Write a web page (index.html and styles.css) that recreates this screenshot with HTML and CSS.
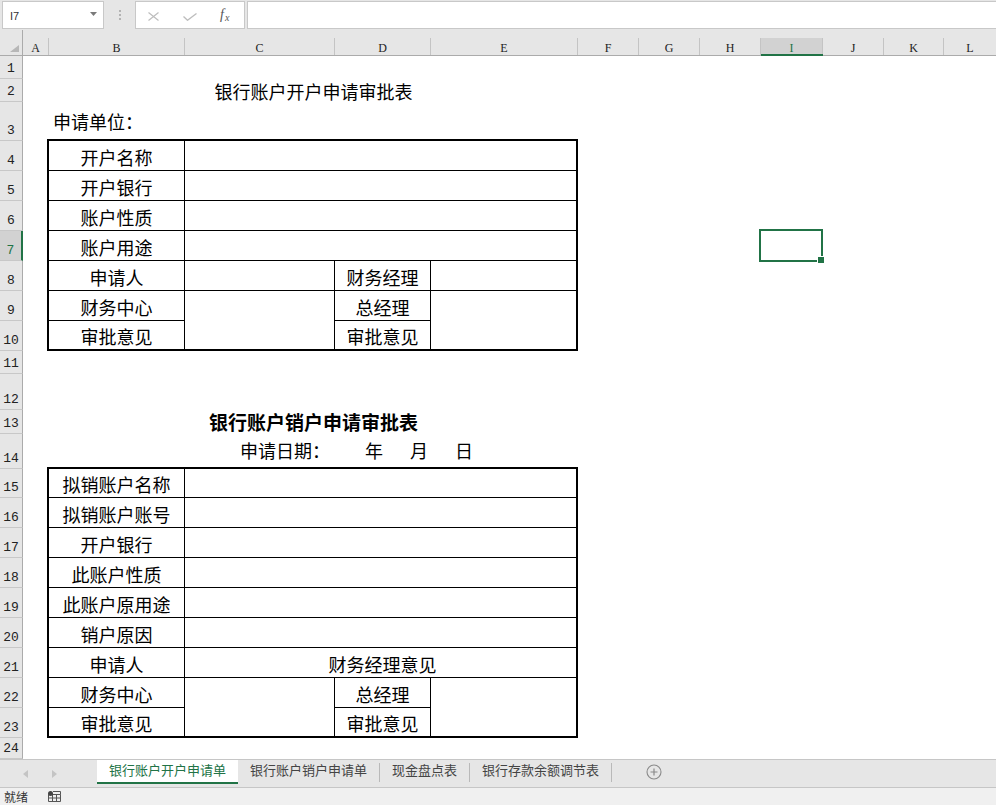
FILE: index.html
```html
<!DOCTYPE html>
<html lang="zh-CN">
<head>
<meta charset="utf-8">
<title>银行账户开户申请单</title>
<link rel="stylesheet" href="styles.css">
</head>
<body>
<div class="app">
  <div class="fbar">
    <div class="namebox">
      <span class="ref">I7</span>
      <svg class="caret" width="7" height="4" viewBox="0 0 7 4"><path d="M0 0H7L3.5 4Z" fill="#7a7a7a"/></svg>
    </div>
    <div class="fsep"><i></i><i></i><i></i></div>
    <div class="fbtns">
      <svg class="bx" width="11" height="9" viewBox="0 0 11 9"><path d="M0.5 0.5L10.5 8.5M10.5 0.5L0.5 8.5" stroke="#bdbdbd" stroke-width="1.2" fill="none"/></svg>
      <svg class="bok" width="14" height="8" viewBox="0 0 14 8"><path d="M0.5 3.5L4.5 7.3L13.5 0.5" stroke="#bdbdbd" stroke-width="1.3" fill="none"/></svg>
      <span class="fx"><i>f</i><span class="fxx">x</span></span>
    </div>
    <div class="finput"></div>
  </div>

  <div class="sheet">
    <div class="hd corner"><svg width="9" height="7" viewBox="0 0 9 7"><path d="M9 0V7H0Z" fill="#b7b7b7"/></svg></div>
    <div class="hd ch"><span>A</span></div>
    <div class="hd ch"><span>B</span></div>
    <div class="hd ch"><span>C</span></div>
    <div class="hd ch"><span>D</span></div>
    <div class="hd ch"><span>E</span></div>
    <div class="hd ch"><span>F</span></div>
    <div class="hd ch"><span>G</span></div>
    <div class="hd ch"><span>H</span></div>
    <div class="hd ch sel"><span>I</span></div>
    <div class="hd ch"><span>J</span></div>
    <div class="hd ch"><span>K</span></div>
    <div class="hd ch last"><span>L</span></div>

    <div class="rh">1</div>
    <div class="rh">2</div>
    <div class="rh">3</div>
    <div class="rh">4</div>
    <div class="rh">5</div>
    <div class="rh">6</div>
    <div class="rh sel">7</div>
    <div class="rh">8</div>
    <div class="rh">9</div>
    <div class="rh">10</div>
    <div class="rh">11</div>
    <div class="rh">12</div>
    <div class="rh">13</div>
    <div class="rh">14</div>
    <div class="rh">15</div>
    <div class="rh">16</div>
    <div class="rh">17</div>
    <div class="rh">18</div>
    <div class="rh">19</div>
    <div class="rh">20</div>
    <div class="rh">21</div>
    <div class="rh">22</div>
    <div class="rh">23</div>
    <div class="rh">24</div>

    <div class="title title1">银行账户开户申请审批表</div>
    <div class="unit">申请单位：</div>

    <div class="form form1">
      <div class="fc">开户名称</div><div class="fc wide"></div>
      <div class="fc">开户银行</div><div class="fc wide"></div>
      <div class="fc">账户性质</div><div class="fc wide"></div>
      <div class="fc">账户用途</div><div class="fc wide"></div>
      <div class="fc">申请人</div><div class="fc"></div><div class="fc">财务经理</div><div class="fc"></div>
      <div class="fc">财务中心</div><div class="fc tall"></div><div class="fc">总经理</div><div class="fc tall"></div>
      <div class="fc">审批意见</div><div class="fc">审批意见</div>
    </div>

    <div class="title title2">银行账户销户申请审批表</div>
    <div class="date">申请日期：<span class="yy">年</span><span class="mm">月</span><span class="dd">日</span></div>

    <div class="form form2">
      <div class="fc">拟销账户名称</div><div class="fc wide"></div>
      <div class="fc">拟销账户账号</div><div class="fc wide"></div>
      <div class="fc">开户银行</div><div class="fc wide"></div>
      <div class="fc">此账户性质</div><div class="fc wide"></div>
      <div class="fc">此账户原用途</div><div class="fc wide"></div>
      <div class="fc">销户原因</div><div class="fc wide"></div>
      <div class="fc">申请人</div><div class="fc wide shift">财务经理意见</div>
      <div class="fc">财务中心</div><div class="fc tall"></div><div class="fc">总经理</div><div class="fc tall"></div>
      <div class="fc">审批意见</div><div class="fc">审批意见</div>
    </div>

    <div class="cursor"><i class="handle"></i></div>
  </div>

  <div class="tabbar">
    <div class="tabnav">
      <svg width="5" height="8" viewBox="0 0 5 8"><path d="M5 0V8L0 4Z" fill="#c4c4c4"/></svg>
      <svg width="5" height="8" viewBox="0 0 5 8"><path d="M0 0V8L5 4Z" fill="#c4c4c4"/></svg>
    </div>
    <div class="tab active">银行账户开户申请单</div>
    <div class="tab">银行账户销户申请单</div>
    <span class="tsep"></span>
    <div class="tab">现金盘点表</div>
    <span class="tsep"></span>
    <div class="tab">银行存款余额调节表</div>
    <span class="tsep"></span>
    <div class="addsheet">
      <svg width="16" height="16" viewBox="0 0 16 16"><circle cx="8" cy="8" r="7" fill="none" stroke="#8a8a8a" stroke-width="1.1"/><path d="M8 4.5V11.5M4.5 8H11.5" stroke="#8a8a8a" stroke-width="1.2"/></svg>
    </div>
  </div>

  <div class="status">
    <span class="ready">就绪</span>
    <svg class="macro" width="13" height="11" viewBox="0 0 13 11">
      <path d="M0.5 3.5H12.5V10.5H0.5Z M0.5 7H12.5 M4.5 3.5V10.5 M8.5 3.5V10.5 M5 0.5H12.5V3.5" fill="none" stroke="#555" stroke-width="1"/>
      <circle cx="2.5" cy="2.5" r="2.5" fill="#444"/>
    </svg>
  </div>
</div>
</body>
</html>
```

FILE: styles.css
```css
* { box-sizing: border-box; }
html, body { margin: 0; padding: 0; }
body {
  width: 996px;
  height: 805px;
  overflow: hidden;
  background: #fff;
  color: #000;
  font-family: "Noto Sans CJK SC", "Liberation Sans", sans-serif;
}
.app { display: flex; flex-direction: column; height: 805px; }

/* formula bar */
.fbar {
  height: 30px;
  flex: none;
  background: #e6e6e6;
  display: flex;
  align-items: flex-start;
  padding: 1px 0 0 2px;
}
.namebox {
  width: 102px;
  height: 28px;
  background: #fff;
  border: 1px solid #c8c8c8;
  display: flex;
  align-items: center;
  justify-content: space-between;
  padding: 0 6px 0 7px;
}
.ref { font-family: "Liberation Sans", sans-serif; font-size: 11px; color: #333; line-height: 14px; padding-top: 2px; }
.caret { margin-top: -2px; }
.fsep {
  width: 31px;
  height: 28px;
  display: flex;
  flex-direction: column;
  align-items: center;
  justify-content: center;
  gap: 2px;
}
.fsep i { display: block; width: 2px; height: 2px; background: #b3b3b3; }
.fbtns {
  width: 110px;
  height: 28px;
  background: #fff;
  border: 1px solid #c8c8c8;
  display: flex;
  align-items: center;
  padding-left: 12px;
}
.bx { margin-top: 3px; }
.bok { margin-left: 24px; margin-top: 4px; }
.fx {
  margin-left: 23px;
  font-family: "Liberation Serif", serif;
  color: #555;
  font-size: 14px;
  line-height: 16px;
  display: flex;
  align-items: flex-end;
}
.fx i { font-style: italic; }
.fxx { font-size: 10px; font-style: italic; line-height: 10px; margin-left: 1px; }
.finput {
  flex: 1;
  height: 28px;
  margin-left: 2px;
  background: #fff;
  border: 1px solid #c8c8c8;
  border-right: none;
}

/* sheet grid */
.sheet {
  position: relative;
  flex: none;
  display: grid;
  grid-template-columns: 23px 26px 136px 150px 96px 147px 61px 61px 61px 62px 61px 60px 1fr;
  grid-template-rows: 26px 23px 23px 39px 30px 30px 30px 30px 30px 30px 30px 23px 36px 24px 35px 29px 30px 30px 30px 30px 30px 30px 30px 30px 21px;
  background: #fff;
}
.hd { grid-row: 1; background: #e6e6e6; border-bottom: 1px solid #ababab; }
.corner {
  border-right: 1px solid #ababab;
  display: flex;
  align-items: flex-end;
  justify-content: flex-end;
  padding: 0 3px 3px 0;
}
.ch { padding-top: 8px; }
.ch span {
  display: block;
  height: 17px;
  border-right: 1px solid #c4c4c4;
  text-align: center;
  font-family: "Liberation Serif", serif;
  font-size: 12px;
  line-height: 14px;
  padding-top: 3px;
  color: #222;
}
.ch.last span { border-right: none; }
.ch.sel { background: #e6e6e6; border-bottom: 2px solid #217346; }
.ch.sel span { background: #d2d2d2; color: #217346; height: 16px; }

.rh {
  grid-column: 1;
  background: #e6e6e6;
  border-right: 1px solid #ababab;
  border-bottom: 1px solid #c8c8c8;
  display: flex;
  align-items: flex-end;
  justify-content: center;
  font-family: "Liberation Mono", monospace;
  font-size: 13px;
  line-height: 14px;
  padding-bottom: 2px;
  color: #222;
}
.rh.sel { background: #d2d2d2; border-right: 2px solid #217346; color: #217346; }

.title {
  grid-column: 3 / 7;
  display: flex;
  align-items: center;
  justify-content: center;
  font-size: 18px;
  line-height: 22px;
  white-space: nowrap;
}
.title1 { grid-row: 3; }
.title2 { grid-row: 14; font-weight: bold; font-size: 19px; }
.unit {
  grid-row: 4;
  grid-column: 3;
  display: flex;
  align-items: center;
  padding: 0 0 1px 4px;
  font-size: 18px;
  line-height: 22px;
  white-space: nowrap;
}
.date {
  grid-row: 15;
  grid-column: 4 / 7;
  display: flex;
  align-items: center;
  padding: 0 0 3px 55px;
  font-size: 18px;
  line-height: 22px;
  white-space: nowrap;
}
.yy { margin-left: 35px; }
.mm { margin-left: 27px; }
.dd { margin-left: 27px; }

.form {
  grid-column: 3 / 7;
  align-self: start;
  justify-self: start;
  display: grid;
  grid-template-columns: 135px 149px 95px 145px;
  gap: 1px;
  width: 531px;
  margin: -2px 0 0 -2px;
  background: #000;
  border: 2px solid #000;
}
.form1 { grid-row: 5 / 12; grid-template-rows: repeat(6, 29px) 28px; height: 212px; }
.form2 { grid-row: 16 / 25; grid-template-rows: 28px repeat(7, 29px) 28px; height: 271px; }
.fc {
  background: #fff;
  display: flex;
  align-items: flex-end;
  justify-content: center;
  font-size: 18px;
  line-height: 22px;
  padding-bottom: 2px;
  white-space: nowrap;
}
.fc.wide { grid-column: 2 / 5; }
.fc.tall { grid-row: span 2; }
.fc.shift { padding-left: 4px; }

.cursor {
  position: absolute;
  left: 759px;
  top: 199px;
  width: 64px;
  height: 33px;
  border: 2px solid #217346;
}
.handle {
  position: absolute;
  right: -3px;
  bottom: -3px;
  width: 7px;
  height: 7px;
  background: #217346;
  border-left: 1px solid #fff;
  border-top: 1px solid #fff;
}

/* sheet tabs */
.tabbar {
  flex: none;
  height: 29px;
  background: #e6e6e6;
  border-top: 1px solid #c6c6c6;
  border-bottom: 1px solid #c6c6c6;
  display: flex;
  align-items: flex-start;
}
.tabnav {
  width: 97px;
  height: 27px;
  display: flex;
  align-items: center;
  padding-left: 23px;
  gap: 24px;
}
.tab {
  height: 24px;
  padding: 0 12px;
  font-size: 13px;
  line-height: 16px;
  padding-top: 0;
  color: #444;
  white-space: nowrap;
  display: flex;
  align-items: center;
  padding-bottom: 4px;
}
.tab.active {
  background: #fff;
  color: #217346;
  border-bottom: 2px solid #217346;
  padding-bottom: 2px;
}
.tsep { width: 1px; height: 19px; background: #b9b9b9; margin-top: 3px; flex: none; }
.addsheet { margin: 4px 0 0 34px; display: flex; }

.status {
  flex: 1;
  background: #f0f0f0;
  display: flex;
  align-items: center;
  padding: 0 0 0 4px;
}
.ready { font-size: 12px; line-height: 16px; color: #333; }
.macro { margin-left: 20px; }
```
